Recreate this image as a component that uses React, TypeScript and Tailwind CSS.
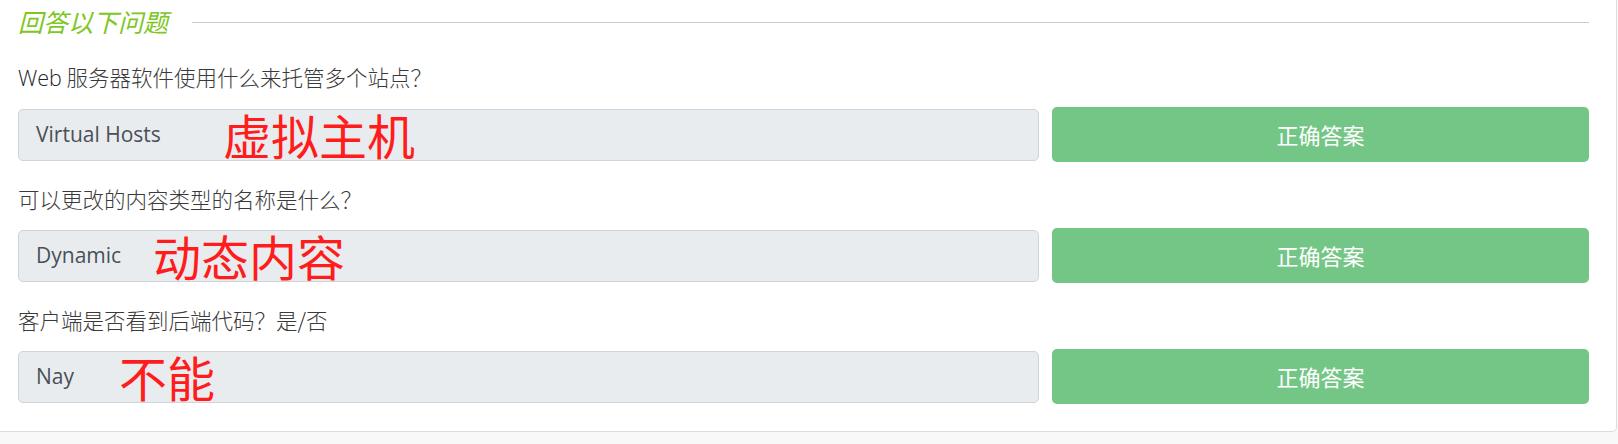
import { ReactElement } from 'react'

const cjk = "font-['Noto_Sans_CJK_SC',sans-serif]"
const latin = "font-['Open_Sans','Noto_Sans_CJK_SC',sans-serif]"

type Question = {
  label: ReactElement
  answer: string
  note: string
  noteLeft: string
}

const questions: Question[] = [
  {
    label: (
      <>
        <span className={`${latin} text-[#212529]`}>Web</span> 服务器软件使用什么来托管多个站点？
      </>
    ),
    answer: 'Virtual Hosts',
    note: '虚拟主机',
    noteLeft: 'left-[204px]',
  },
  {
    label: <>可以更改的内容类型的名称是什么？</>,
    answer: 'Dynamic',
    note: '动态内容',
    noteLeft: 'left-[134px]',
  },
  {
    label: (
      <>
        客户端是否看到后端代码？是<span className="text-[#212529]">/</span>否
      </>
    ),
    answer: 'Nay',
    note: '不能',
    noteLeft: 'left-[100px]',
  },
]

const QuestionRow = ({ q, first }: { q: Question; first: boolean }) => (
  <div className={first ? 'mt-[23px]' : 'mt-[22px]'}>
    <p className={`${cjk} font-light text-[21.5px] leading-[30px] text-[#3a3a3a]`}>
      {q.label}
    </p>
    <div className="mt-[14px] flex h-[55px] items-center gap-[13px]">
      <div className="relative flex h-[52px] flex-1 items-center rounded-[5px] border border-[#ced4da] bg-[#e9ecef] px-[17px]">
        <span className={`${latin} text-[21px] text-[#495057]`}>{q.answer}</span>
        <span
          className={`${cjk} absolute top-[-5px] ${q.noteLeft} text-[48px] leading-[58px] text-[#ff1c1c]`}
        >
          {q.note}
        </span>
      </div>
      <button
        className={`${cjk} h-[55px] w-[537px] rounded-[5px] bg-[#74c686] text-[22px] font-normal text-white`}
      >
        正确答案
      </button>
    </div>
  </div>
)

export default function App() {
  return (
    <div className="h-[444px] w-[1618px] overflow-hidden bg-[#f8f8f8]">
      <section className="w-[1617px] rounded-br-[5px] border-r border-b border-[#dcdcdc] bg-white pb-[27px] pl-[18px] pr-[27px] pt-[5px]">
        <header className="flex h-[34px] items-center gap-[24px]">
          <h2 className={`${cjk} text-[25px] italic text-[#7dc71f]`}>回答以下问题</h2>
          <div className="h-px flex-1 bg-[#cccccc]"></div>
        </header>
        {questions.map((q, i) => (
          <QuestionRow key={q.answer} q={q} first={i === 0} />
        ))}
      </section>
    </div>
  )
}
